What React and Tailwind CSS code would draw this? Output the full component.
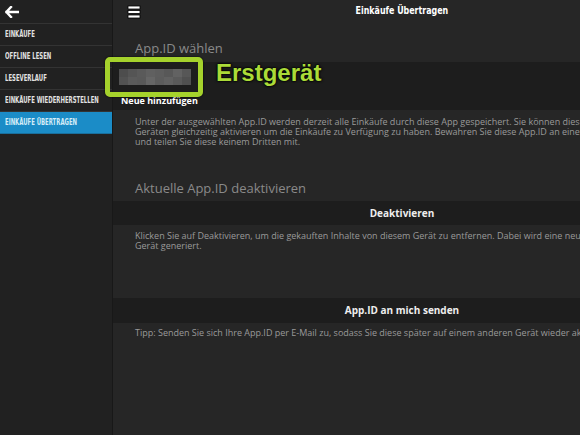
const menu = [
  { label: 'Einkäufe' },
  { label: 'Offline lesen' },
  { label: 'Leseverlauf' },
  { label: 'Einkäufe wiederherstellen' },
  { label: 'Einkäufe übertragen', active: true },
];

const idCells = [
  ['#4d4d4d', '#555', '#5a5a5a', '#606060', '#5d5d5d', '#585858', '#626262', '#575757'],
  ['#525252', '#5b5b5b', '#595959', '#666', '#5c5c5c', '#616161', '#5a5a5a', '#505050'],
];

function Condensed({ children, className = '' }) {
  return (
    <span className={`inline-block origin-left scale-x-[0.66] whitespace-nowrap ${className}`}>
      {children}
    </span>
  );
}

export default function App() {
  const sans = { fontFamily: '"Open Sans", "Noto Sans", sans-serif' };
  const cond = { fontFamily: '"DejaVu Sans Condensed", "DejaVu Sans", sans-serif' };

  return (
    <div className="relative flex h-[435px] w-[580px] overflow-hidden bg-[#262626]" style={sans}>
      {/* Sidebar */}
      <div className="flex w-[113px] shrink-0 flex-col border-r border-[#181818] bg-[#212121]" style={cond}>
        <div className="flex h-[24px] items-center border-b border-[#333] pl-[5px]">
          <svg width="14" height="12" viewBox="0 0 14 12">
            <path d="M6 1 L1.5 6 L6 11 M1.5 6 H13" fill="none" stroke="#fff" strokeWidth="2.4" strokeLinecap="square" />
          </svg>
        </div>
        {menu.map((m) => (
          <div
            key={m.label}
            className={`flex h-[22px] items-center border-b pl-[5px] text-[9px] font-bold uppercase ${
              m.active ? 'border-[#1a6f9c] bg-[#1b8cc7] text-[#d4ecf8]' : 'border-[#333] text-[#e2e2e2]'
            }`}
          >
            <Condensed>{m.label}</Condensed>
          </div>
        ))}
      </div>

      {/* Main */}
      <div className="flex w-[578px] shrink-0 flex-col">
        <div className="relative flex h-[23px] items-center justify-center">
          <svg className="absolute left-[14px] top-[5px]" width="14" height="14" viewBox="0 0 14 14">
            <rect x="1" y="1" width="12" height="3" fill="#fff" stroke="#000" strokeWidth="0.8" />
            <rect x="1" y="5.5" width="12" height="3" fill="#fff" stroke="#000" strokeWidth="0.8" />
            <rect x="1" y="10" width="12" height="3" fill="#fff" stroke="#000" strokeWidth="0.8" />
          </svg>
          <span className="text-[11px] font-bold text-white" style={cond}>
            <span className="inline-block scale-x-[0.8]">Einkäufe Übertragen</span>
          </span>
        </div>

        <div className="mt-[17px] pl-[22px] text-[13px] leading-[16px] text-[#8a8a8a]">App.ID wählen</div>

        <div className="mt-[6px] flex h-[48px] flex-col bg-[#1d1d1d]">
          <div className="flex h-[30px] items-center pl-[6px]">
            <div className="grid grid-cols-8">
              {idCells.flat().map((c, i) => (
                <div key={i} className="h-[8px] w-[9px]" style={{ backgroundColor: c }} />
              ))}
            </div>
          </div>
          <div className="flex h-[18px] items-center pl-[8px] text-[9px] font-bold text-white">Neue hinzufügen</div>
        </div>

        <p className="mt-[7px] whitespace-nowrap pl-[22px] text-[9px] leading-[10px] text-[#9a9a9a]">
          Unter der ausgewählten App.ID werden derzeit alle Einkäufe durch diese App gespeichert. Sie können diese App.ID auf mehreren
          <br />
          Geräten gleichzeitig aktivieren um die Einkäufe zu Verfügung zu haben. Bewahren Sie diese App.ID an einem sicheren Ort auf
          <br />
          und teilen Sie diese keinem Dritten mit.
        </p>

        <div className="mt-[33px] pl-[22px] text-[13px] leading-[16px] text-[#8a8a8a]">Aktuelle App.ID deaktivieren</div>

        <div className="mt-[5px] flex h-[24px] items-center justify-center bg-[#1d1d1d] text-[10px] font-bold text-[#eee]">
          Deaktivieren
        </div>

        <p className="mt-[6px] whitespace-nowrap pl-[22px] text-[9px] leading-[10px] text-[#9a9a9a]">
          Klicken Sie auf Deaktivieren, um die gekauften Inhalte von diesem Gerät zu entfernen. Dabei wird eine neue App.ID für dieses
          <br />
          Gerät generiert.
        </p>

        <div className="mt-[47px] flex h-[25px] items-center justify-center bg-[#1d1d1d] text-[10px] font-bold text-[#eee]">
          App.ID an mich senden
        </div>

        <p className="mt-[5px] whitespace-nowrap pl-[22px] text-[9px] leading-[10px] text-[#9a9a9a]">
          Tipp: Senden Sie sich Ihre App.ID per E-Mail zu, sodass Sie diese später auf einem anderen Gerät wieder aktivieren können.
        </p>
      </div>

      {/* Highlight overlay */}
      <div className="absolute left-[105px] top-[57px] h-[40px] w-[98px] rounded-[5px] border-[5px] border-[#a5d22c] shadow-[0_0_2px_#000]" />
      <div
        className="absolute left-[216px] top-[58px] text-[24px] font-bold leading-[30px] text-[#abdb38] [text-shadow:0_0_2px_#000,0_0_3px_#000,0_0_1px_#000]"
        style={{ fontFamily: '"Liberation Sans", Arial, sans-serif' }}
      >
        Erstgerät
      </div>
    </div>
  );
}
